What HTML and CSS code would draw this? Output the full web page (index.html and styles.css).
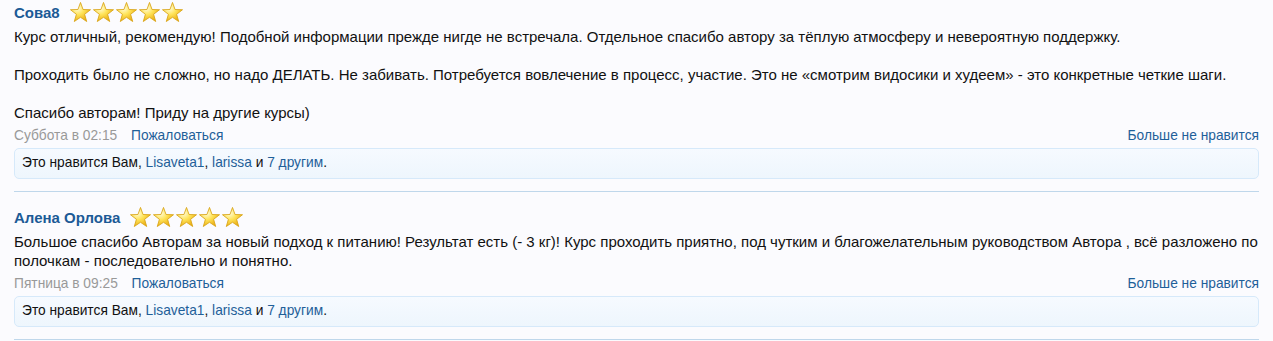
FILE: index.html
```html
<!DOCTYPE html>
<html lang="ru">
<head>
    <meta charset="UTF-8">
    <meta name="viewport" content="width=device-width, initial-scale=1.0">
    <title>Отзывы</title>
    <link rel="stylesheet" href="styles.css">
</head>
<body>
    <svg class="defs" width="0" height="0" aria-hidden="true">
        <defs>
            <radialGradient id="starFill" cx="35%" cy="30%" r="75%">
                <stop offset="0" stop-color="#fffde0"/>
                <stop offset="0.45" stop-color="#ffe45a"/>
                <stop offset="1" stop-color="#e9a90c"/>
            </radialGradient>
            <symbol id="star" viewBox="0 0 24 24">
                <polygon points="12,1.5 14.65,8.86 22.46,9.1 16.28,13.89 18.47,21.4 12,17 5.53,21.4 7.72,13.89 1.54,9.1 9.35,8.86"
                         fill="url(#starFill)" stroke="#d9a417" stroke-width="0.9" stroke-linejoin="round"/>
            </symbol>
        </defs>
    </svg>

    <div class="reviews">
        <div class="review">
            <div class="review-head">
                <a class="author" href="#">Сова8</a>
                <span class="stars">
                    <svg><use href="#star"/></svg><svg><use href="#star"/></svg><svg><use href="#star"/></svg><svg><use href="#star"/></svg><svg><use href="#star"/></svg>
                </span>
            </div>
            <div class="review-text">
                Курс отличный, рекомендую! Подобной информации прежде нигде не встречала. Отдельное спасибо автору за тёплую атмосферу и невероятную поддержку.<br><br>
                Проходить было не сложно, но надо ДЕЛАТЬ. Не забивать. Потребуется вовлечение в процесс, участие. Это не «смотрим видосики и худеем» - это конкретные четкие шаги.<br><br>
                Спасибо авторам! Приду на другие курсы)
            </div>
            <div class="review-meta">
                <div>
                    <span class="date">Суббота в 02:15</span>
                    <a class="report" href="#">Пожаловаться</a>
                </div>
                <a href="#">Больше не нравится</a>
            </div>
            <div class="likes">
                Это нравится Вам, <a href="#">Lisaveta1</a>, <a href="#">larissa</a> и <a href="#">7 другим</a>.
            </div>
        </div>

        <div class="review">
            <div class="review-head">
                <a class="author" href="#">Алена Орлова</a>
                <span class="stars">
                    <svg><use href="#star"/></svg><svg><use href="#star"/></svg><svg><use href="#star"/></svg><svg><use href="#star"/></svg><svg><use href="#star"/></svg>
                </span>
            </div>
            <div class="review-text">
                Большое спасибо Авторам за новый подход к питанию! Результат есть (- 3 кг)! Курс проходить приятно, под чутким и благожелательным руководством Автора , всё разложено по полочкам - последовательно и понятно.
            </div>
            <div class="review-meta">
                <div>
                    <span class="date">Пятница в 09:25</span>
                    <a class="report" href="#">Пожаловаться</a>
                </div>
                <a href="#">Больше не нравится</a>
            </div>
            <div class="likes">
                Это нравится Вам, <a href="#">Lisaveta1</a>, <a href="#">larissa</a> и <a href="#">7 другим</a>.
            </div>
        </div>
    </div>
</body>
</html>
```

FILE: styles.css
```css
body {
    margin: 0;
    padding: 0 14px;
    background-color: #fbfbfe;
    font-family: 'Liberation Sans', Arial, sans-serif;
    color: #111;
}

a {
    color: #1f5f99;
    text-decoration: none;
}

.defs {
    position: absolute;
}

.review {
    padding: 13px 0 12px;
    border-bottom: 1px solid #bfd7eb;
}

.review:first-child {
    padding-top: 0;
}

.review-head {
    display: flex;
    align-items: center;
    height: 25px;
}

.author {
    font-size: 15px;
    font-weight: bold;
    color: #1b5a96;
}

.stars {
    display: flex;
    margin-left: 9px;
}

.stars svg {
    width: 23px;
    height: 23px;
}

.review-text {
    margin-top: 2px;
    font-size: 15px;
    line-height: 19px;
}

.review-meta {
    display: flex;
    justify-content: space-between;
    margin-top: 5px;
    font-size: 13.75px;
    line-height: 18px;
}

.date {
    color: #999;
}

.report {
    margin-left: 10px;
}

.likes {
    margin-top: 3px;
    padding: 6px 7px 7px;
    font-size: 13.75px;
    line-height: 16px;
    border: 1px solid #d6e9fa;
    border-radius: 5px;
    background: linear-gradient(#f6faff, #eef6fd);
}
```
